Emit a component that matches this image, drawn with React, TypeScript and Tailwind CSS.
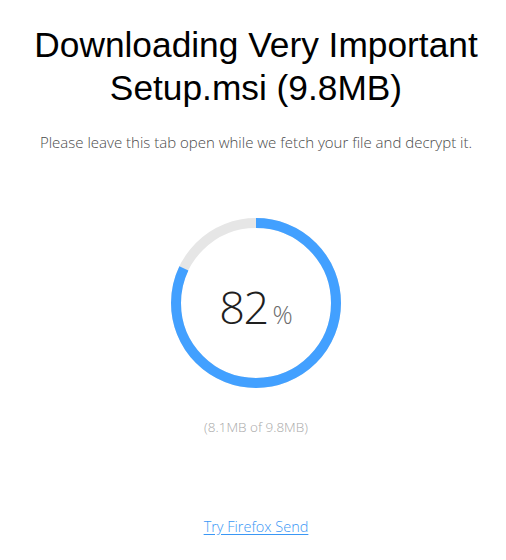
import React from 'react';

const sans = { fontFamily: '"Open Sans", "Noto Sans", sans-serif' };

function ProgressRing({ percent }: { percent: number }) {
  const r = 80;
  const c = 2 * Math.PI * r;
  return (
    <div className="relative w-[170px] h-[170px]">
      <svg width="170" height="170" viewBox="0 0 170 170" className="-rotate-90">
        <circle cx="85" cy="85" r={r} fill="none" stroke="#e6e6e6" strokeWidth="10" />
        <circle
          cx="85"
          cy="85"
          r={r}
          fill="none"
          stroke="#42a0ff"
          strokeWidth="10"
          strokeDasharray={`${(c * percent) / 100} ${c}`}
        />
      </svg>
      <div className="absolute inset-0 flex items-baseline justify-center pt-[66px]">
        <span className="font-['Open_Sans'] font-light text-[45px] leading-[45px] tracking-[-1.5px] text-[#1f1f1f]">{percent}</span>
        <span className="font-['Open_Sans'] font-light text-[25px] leading-none text-[#6b6b6b] ml-[5px]">%</span>
      </div>
    </div>
  );
}

export default function App() {
  return (
    <div className="w-[506px] h-[560px] bg-white flex flex-col items-center pt-[23px] pl-[6px]">
      <h1 className="font-['Liberation_Sans'] text-[35.3px] leading-[43px] text-black text-center font-normal">
        Downloading Very Important
        <br />
        Setup.msi (9.8MB)
      </h1>

      <p style={sans} className="mt-[23px] text-[15px] leading-[21px] text-[#4a4a4a] font-light whitespace-nowrap">
        Please leave this tab open while we fetch your file and decrypt it.
      </p>

      <div className="mt-[65px]">
        <ProgressRing percent={82} />
      </div>

      <p style={sans} className="mt-[29px] text-[13.5px] leading-[20px] text-[#a8a8a8] font-light">
        (8.1MB of 9.8MB)
      </p>

      <a
        href="#"
        style={sans}
        className="mt-[80px] text-[14.5px] leading-[20px] text-[#3a97f5] underline underline-offset-2 font-light"
      >
        Try Firefox Send
      </a>
    </div>
  );
}
